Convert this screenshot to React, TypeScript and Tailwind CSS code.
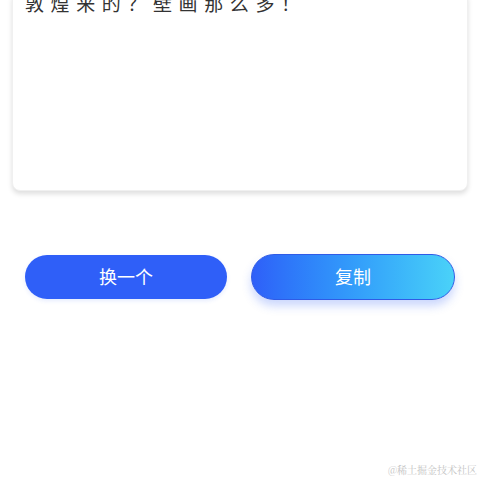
import React from 'react';

const FONT = "font-['Noto_Sans','Noto_Sans_CJK_SC',sans-serif]";

export default function App() {
  return (
    <div className={`relative w-[480px] h-[480px] overflow-hidden bg-white ${FONT}`}>
      {/* Poem card */}
      <div className="mx-3 -mt-[9px] h-[200px] rounded-lg bg-white shadow-[0_3px_5px_rgba(0,0,0,0.13)] border border-[#f0f0f0]">
        <p className="pl-[12px] -mt-[2px] text-[19px] leading-[28px] tracking-[6.6px] text-[#333333]">
          敦煌来的？壁画那么多！
        </p>
      </div>

      {/* Actions */}
      <div className="flex items-center gap-[24px] px-[25px] mt-[63px]">
        <button className="w-[202px] h-[44px] rounded-full bg-[#2f5ff8] text-white text-[18px] shadow-[0_2px_4px_rgba(47,95,248,0.12)]">
          换一个
        </button>
        <button className="w-[204px] h-[46px] rounded-full border border-[#2f5be6] bg-gradient-to-r from-[#2f5ff8] to-[#4ad2f8] text-white text-[18px] shadow-[0_6px_10px_rgba(47,95,248,0.25)]">
          复制
        </button>
      </div>

      <span className="absolute right-[3px] bottom-[3px] text-[10px] text-[#c4c4c4] font-['Noto_Serif_CJK_SC','Noto_Sans_CJK_SC',serif]">
        @稀土掘金技术社区
      </span>
    </div>
  );
}
